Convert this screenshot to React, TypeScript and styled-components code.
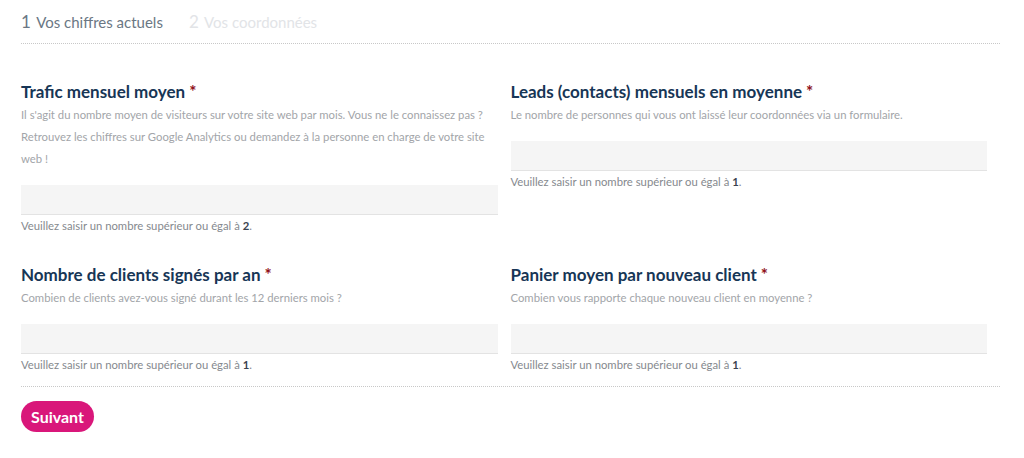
import styled, { createGlobalStyle } from 'styled-components';

const GlobalStyle = createGlobalStyle`
  html, body {
    margin: 0;
    padding: 0;
    background: #fff;
  }
  body {
    font-family: Lato, "Open Sans", sans-serif;
  }
`;

type Field = {
  label: string;
  description: string;
  min: number;
};

const fields: Field[] = [
  {
    label: 'Trafic mensuel moyen',
    description:
      "Il s'agit du nombre moyen de visiteurs sur votre site web par mois. Vous ne le connaissez pas ? Retrouvez les chiffres sur Google Analytics ou demandez à la personne en charge de votre site web !",
    min: 2,
  },
  {
    label: 'Leads (contacts) mensuels en moyenne',
    description: 'Le nombre de personnes qui vous ont laissé leur coordonnées via un formulaire.',
    min: 1,
  },
  {
    label: 'Nombre de clients signés par an',
    description: 'Combien de clients avez-vous signé durant les 12 derniers mois ?',
    min: 1,
  },
  {
    label: 'Panier moyen par nouveau client',
    description: 'Combien vous rapporte chaque nouveau client en moyenne ?',
    min: 1,
  },
];

export default function App() {
  return (
    <>
      <GlobalStyle />
      <Page>
        <Steps>
          <Step $active>
            <StepNum>1</StepNum> Vos chiffres actuels
          </Step>
          <Step>
            <StepNum>2</StepNum> Vos coordonnées
          </Step>
        </Steps>

        <Grid>
          {fields.map((f) => (
            <FieldBox key={f.label}>
              <Label>
                {f.label}
                <Required>*</Required>
              </Label>
              <Description>{f.description}</Description>
              <Input type="number" />
              <Help>
                Veuillez saisir un nombre supérieur ou égal à <strong>{f.min}</strong>.
              </Help>
            </FieldBox>
          ))}
        </Grid>

        <Footer>
          <NextButton>Suivant</NextButton>
        </Footer>
      </Page>
    </>
  );
}

const Page = styled.div`
  padding: 0 24px 0 21px;
`;

const Steps = styled.div`
  display: flex;
  gap: 26px;
  padding: 11px 0 11px;
  border-bottom: 1px dotted #c8c8c8;
`;

const Step = styled.div<{ $active?: boolean }>`
  font-size: 15px;
  color: ${(p) => (p.$active ? '#6b7784' : '#e2e4e7')};
`;

const StepNum = styled.span`
  font-size: 17px;
  margin-right: 2px;
`;

const Grid = styled.div`
  display: grid;
  grid-template-columns: 1fr 1fr;
  row-gap: 29px;
  padding: 36px 0 13px;
  border-bottom: 1px dotted #c8c8c8;
`;

const FieldBox = styled.div`
  display: flex;
  flex-direction: column;
  padding-right: 13px;
`;

const Label = styled.div`
  font-size: 17px;
  font-weight: 700;
  color: #173656;
  line-height: 24px;
`;

const Required = styled.span`
  color: #8f1018;
  margin-left: 4px;
`;

const Description = styled.p`
  margin: 0;
  font-size: 11.3px;
  line-height: 22px;
  color: #a2a5a9;
`;

const Input = styled.input`
  margin-top: 15px;
  height: 30px;
  border: none;
  border-bottom: 1px solid #e3e3e3;
  background: #f5f5f5;
  outline: none;
  padding: 0 10px;
  box-sizing: border-box;
`;

const Help = styled.div`
  margin-top: 3px;
  font-size: 11.3px;
  line-height: 16px;
  color: #85898e;

  strong {
    color: #3b4350;
  }
`;

const Footer = styled.div`
  padding-top: 14px;
`;

const NextButton = styled.button`
  font-family: Lato, "Open Sans", sans-serif;
  background: #d9177a;
  color: #fff;
  border: none;
  border-radius: 16px;
  height: 31px;
  padding: 0 10px;
  font-size: 16px;
  font-weight: 700;
  cursor: pointer;
`;
